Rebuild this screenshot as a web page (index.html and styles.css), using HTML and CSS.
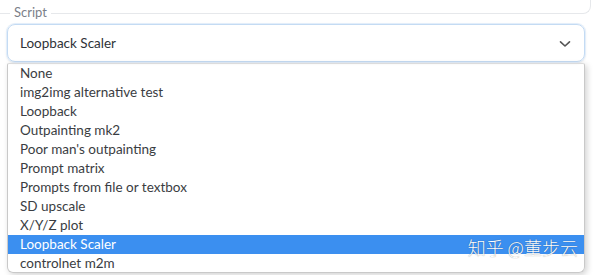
FILE: index.html
```html
<!DOCTYPE html>
<html>
<head>
<meta charset="utf-8">
<link rel="stylesheet" href="styles.css">
</head>
<body>
<div class="page">
  <div class="prev-block"></div>
  <div class="label">Script</div>
  <div class="select">
    <span class="value">Loopback Scaler</span>
    <svg class="chevron" width="12" height="8" viewBox="0 0 12 8"><path d="M1.5 1.8 L6 6 L10.5 1.8" fill="none" stroke="#555" stroke-width="1.6" stroke-linecap="round" stroke-linejoin="round"/></svg>
  </div>
  <ul class="list">
    <li>None</li>
    <li>img2img alternative test</li>
    <li>Loopback</li>
    <li>Outpainting mk2</li>
    <li>Poor man's outpainting</li>
    <li>Prompt matrix</li>
    <li>Prompts from file or textbox</li>
    <li>SD upscale</li>
    <li>X/Y/Z plot</li>
    <li class="selected">Loopback Scaler</li>
    <li>controlnet m2m</li>
  </ul>
  <div class="watermark">知乎 @董步云</div>
</div>
</body>
</html>
```
FILE: styles.css
```css
html, body {
  margin: 0;
  padding: 0;
  background: #fff;
}
body {
  font-family: Lato, "Noto Sans", sans-serif;
  width: 596px;
  height: 275px;
  overflow: hidden;
}
.page {
  position: relative;
  width: 596px;
  height: 275px;
}
.prev-block {
  margin-left: -20px;
  width: 611px;
  height: 14px;
  box-sizing: border-box;
  border-bottom: 1px solid #e6e8eb;
  border-right: 1px solid #e6e8eb;
  border-bottom-right-radius: 8px;
}
.label {
  position: relative;
  width: fit-content;
  margin: -10px 0 0 10px;
  padding: 0 4px;
  background: #fff;
  font-size: 13px;
  line-height: 16px;
  color: #7b8088;
}
.select {
  margin: 4px 0 0 7px;
  width: 578px;
  height: 38px;
  box-sizing: border-box;
  border: 1px solid #c4dbf3;
  border-radius: 8px;
  box-shadow: 0 0 0 1px #e3eefa, 0 1px 3px rgba(0,0,0,0.12);
  display: flex;
  align-items: center;
  justify-content: space-between;
  padding: 0 13px 0 12px;
}
.value {
  font-size: 13.5px;
  color: #2f3338;
}
.chevron {
  display: block;
  margin-top: 1px;
}
.list {
  list-style: none;
  margin: 1px 0 0 7px;
  padding: 0;
  width: 578px;
  height: 210px;
  box-sizing: border-box;
  border: 1px solid #c9c9c9;
  border-top-color: #dcdcdc;
  border-radius: 2px 2px 6px 6px;
  box-shadow: 2px 2px 6px rgba(0,0,0,0.18);
  overflow: hidden;
}
.list li {
  height: 19px;
  line-height: 19px;
  font-size: 13.5px;
  color: #3a3d42;
  padding-left: 12px;
}
.list li.selected {
  background: #3b8ff0;
  color: #fff;
}
.watermark {
  position: absolute;
  right: 18px;
  top: 237px;
  font-family: "Noto Sans CJK SC", sans-serif;
  font-size: 18px;
  line-height: 21px;
  font-weight: 300;
  color: #fff;
  text-shadow: 0 0 1px rgba(0,0,0,0.5);
}
```
